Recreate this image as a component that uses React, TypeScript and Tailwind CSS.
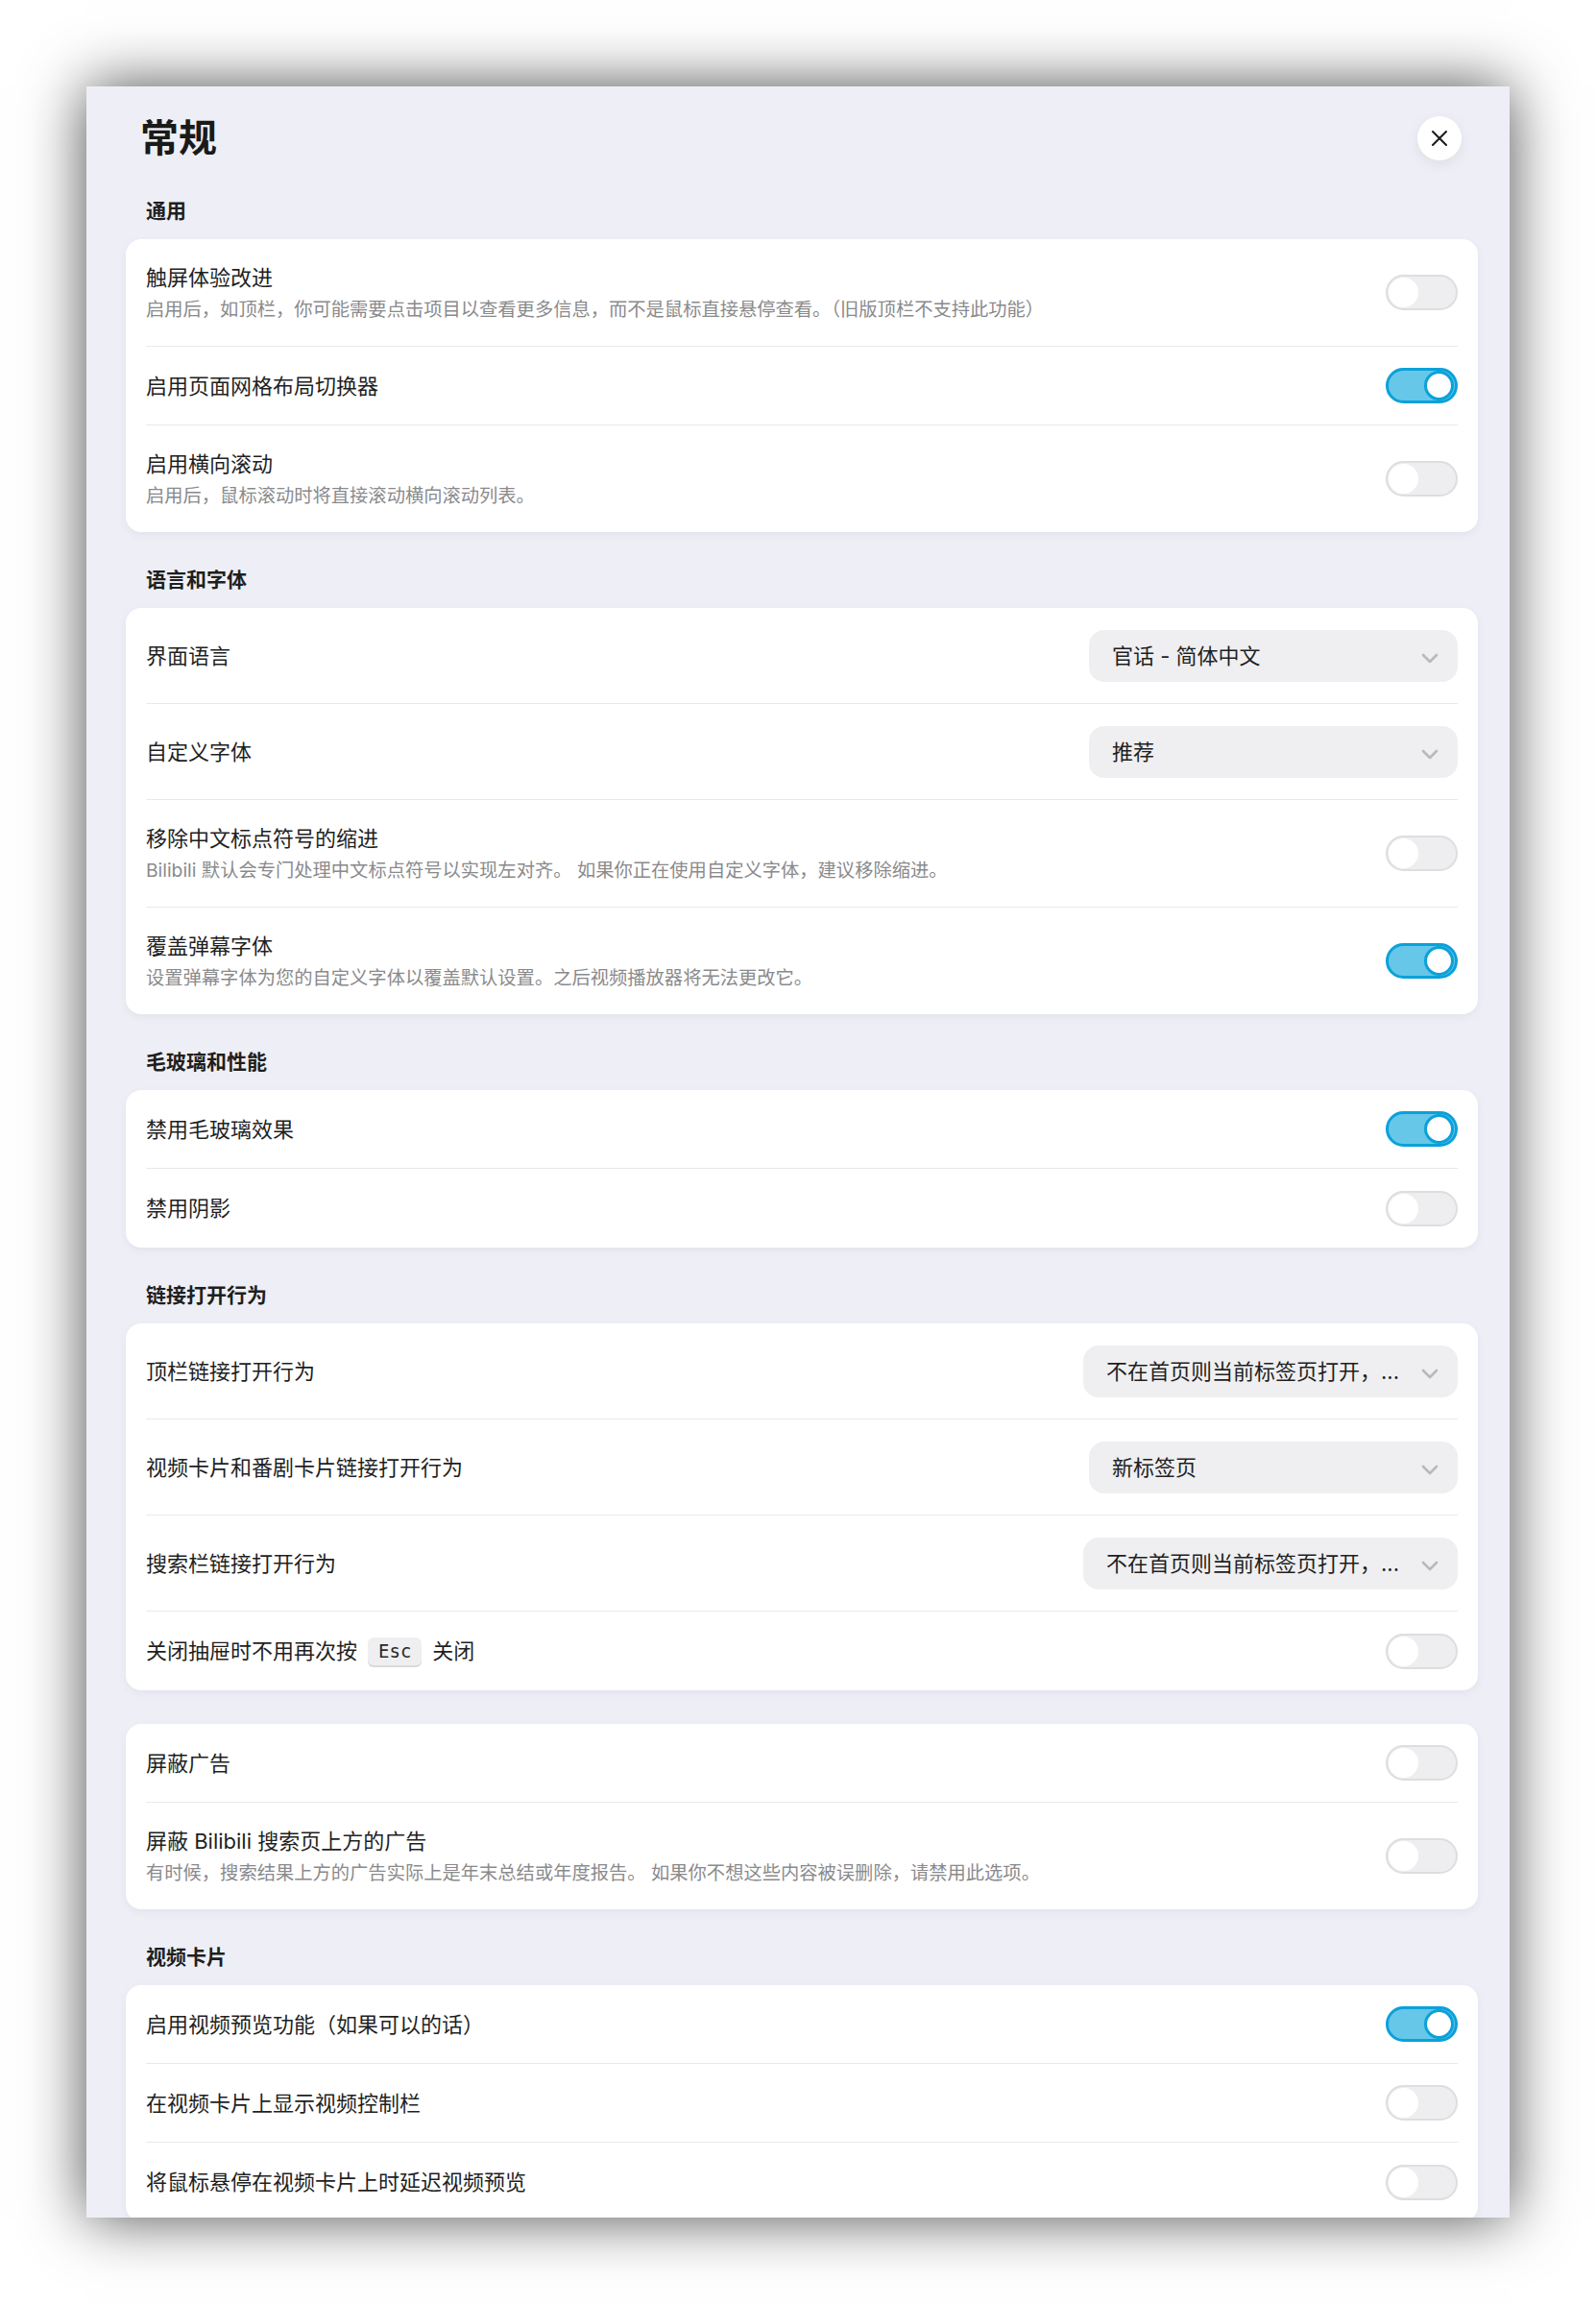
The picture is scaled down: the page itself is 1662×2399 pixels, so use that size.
import { ReactNode } from 'react';

type Row =
  | { kind: 'toggle'; label: ReactNode; desc?: string; on: boolean }
  | { kind: 'select'; label: string; value: string; wide?: boolean };

interface Section {
  title?: string;
  rows: Row[];
}

const sections: Section[] = [
  {
    title: '通用',
    rows: [
      {
        kind: 'toggle',
        label: '触屏体验改进',
        desc: '启用后，如顶栏，你可能需要点击项目以查看更多信息，而不是鼠标直接悬停查看。（旧版顶栏不支持此功能）',
        on: false,
      },
      { kind: 'toggle', label: '启用页面网格布局切换器', on: true },
      { kind: 'toggle', label: '启用横向滚动', desc: '启用后，鼠标滚动时将直接滚动横向滚动列表。', on: false },
    ],
  },
  {
    title: '语言和字体',
    rows: [
      { kind: 'select', label: '界面语言', value: '官话 - 简体中文' },
      { kind: 'select', label: '自定义字体', value: '推荐' },
      {
        kind: 'toggle',
        label: '移除中文标点符号的缩进',
        desc: 'Bilibili 默认会专门处理中文标点符号以实现左对齐。 如果你正在使用自定义字体，建议移除缩进。',
        on: false,
      },
      {
        kind: 'toggle',
        label: '覆盖弹幕字体',
        desc: '设置弹幕字体为您的自定义字体以覆盖默认设置。之后视频播放器将无法更改它。',
        on: true,
      },
    ],
  },
  {
    title: '毛玻璃和性能',
    rows: [
      { kind: 'toggle', label: '禁用毛玻璃效果', on: true },
      { kind: 'toggle', label: '禁用阴影', on: false },
    ],
  },
  {
    title: '链接打开行为',
    rows: [
      { kind: 'select', label: '顶栏链接打开行为', value: '不在首页则当前标签页打开，...', wide: true },
      { kind: 'select', label: '视频卡片和番剧卡片链接打开行为', value: '新标签页' },
      { kind: 'select', label: '搜索栏链接打开行为', value: '不在首页则当前标签页打开，...', wide: true },
      {
        kind: 'toggle',
        label: (
          <>
            关闭抽屉时不用再次按
            <kbd className="mx-[11px] inline-flex h-[29px] items-center rounded-[6px] bg-[#efeff1] px-[11px] font-['DejaVu_Sans_Mono',monospace] text-[19px] text-[#2a2a2a] shadow-[0_2px_0_#d9d9dc]">
              Esc
            </kbd>
            关闭
          </>
        ),
        on: false,
      },
    ],
  },
  {
    rows: [
      { kind: 'toggle', label: '屏蔽广告', on: false },
      {
        kind: 'toggle',
        label: '屏蔽 Bilibili 搜索页上方的广告',
        desc: '有时候，搜索结果上方的广告实际上是年末总结或年度报告。 如果你不想这些内容被误删除，请禁用此选项。',
        on: false,
      },
    ],
  },
  {
    title: '视频卡片',
    rows: [
      { kind: 'toggle', label: '启用视频预览功能（如果可以的话）', on: true },
      { kind: 'toggle', label: '在视频卡片上显示视频控制栏', on: false },
      { kind: 'toggle', label: '将鼠标悬停在视频卡片上时延迟视频预览', on: false },
    ],
  },
];

function Toggle({ on }: { on: boolean }) {
  if (on) {
    return (
      <div className="relative h-[37px] w-[75px] shrink-0 rounded-full border-[3px] border-[#0ba1d9] bg-[#66c7e9]">
        <div className="absolute right-[1px] top-0 size-[31px] rounded-full border-[3px] border-[#0ba1d9] bg-white" />
      </div>
    );
  }
  return (
    <div className="relative h-[37px] w-[75px] shrink-0 rounded-full border-2 border-[#dedee0] bg-[#eeeef0]">
      <div className="absolute left-[1px] top-[1px] size-[31px] rounded-full bg-white" />
    </div>
  );
}

function Select({ value, wide }: { value: string; wide?: boolean }) {
  return (
    <div
      className={`flex h-[54px] shrink-0 items-center justify-between rounded-[16px] bg-[#efeff1] pl-[24px] pr-[20px] ${wide ? 'w-[390px]' : 'w-[384px]'}`}
    >
      <span className="text-[22px] leading-[32px] text-[#1f1f1f]">{value}</span>
      <svg width="18" height="11" viewBox="0 0 18 11" fill="none" className="mt-[6px]">
        <path d="M2 2L9 9L16 2" stroke="#b9b9bc" strokeWidth="2.6" strokeLinecap="round" strokeLinejoin="round" />
      </svg>
    </div>
  );
}

function SettingRow({ row }: { row: Row }) {
  if (row.kind === 'select') {
    return (
      <div className="flex h-[100px] items-center justify-between gap-6">
        <div className="text-[22px] leading-[32px] text-[#1f1f1f]">{row.label}</div>
        <Select value={row.value} wide={row.wide} />
      </div>
    );
  }
  if (row.desc) {
    return (
      <div className="flex items-center justify-between gap-6 py-[24px]">
        <div>
          <div className="text-[22px] leading-[32px] text-[#1f1f1f]">{row.label}</div>
          <div className="mt-[3px] text-[19.3px] leading-[28px] text-[#8a8a8c]">{row.desc}</div>
        </div>
        <Toggle on={row.on} />
      </div>
    );
  }
  return (
    <div className="flex h-[82px] items-center justify-between gap-6">
      <div className="flex items-center text-[22px] leading-[32px] text-[#1f1f1f]">{row.label}</div>
      <Toggle on={row.on} />
    </div>
  );
}

export default function App() {
  return (
    <div className="min-h-[2399px] bg-white p-[90px] font-['Inter','Noto_Sans_CJK_SC',sans-serif]">
      <div className="h-[2219px] overflow-hidden bg-[#eeeff6] pl-[41px] pr-[33px] shadow-[0_0_60px_rgba(0,0,0,0.7)]">
        {/* Header */}
        <div className="mt-[26px] flex h-[56px] items-center justify-between pl-[15px] pr-[17px]">
          <h1 className="text-[40px] font-bold leading-[56px] text-[#1a1a1a]">常规</h1>
          <button className="flex size-[46px] items-center justify-center rounded-full bg-white shadow-[0_4px_14px_rgba(0,0,0,0.07)]">
            <svg width="18" height="18" viewBox="0 0 18 18" fill="none">
              <path d="M2 2L16 16M16 2L2 16" stroke="#1c1c1c" strokeWidth="2.1" strokeLinecap="round" />
            </svg>
          </button>
        </div>

        {/* Sections */}
        <div className="mt-[33px] flex flex-col gap-[35px]">
          {sections.map((section, i) => (
            <section key={i}>
              {section.title && (
                <h2 className="mb-[14px] pl-[21px] text-[21px] font-bold leading-[30px] text-[#1f1f1f]">
                  {section.title}
                </h2>
              )}
              <div className="divide-y divide-[#e9e9eb] rounded-[16px] bg-white px-[21px] shadow-[0_3px_10px_rgba(0,0,0,0.05)]">
                {section.rows.map((row, j) => (
                  <SettingRow key={j} row={row} />
                ))}
              </div>
            </section>
          ))}
        </div>
      </div>
    </div>
  );
}
